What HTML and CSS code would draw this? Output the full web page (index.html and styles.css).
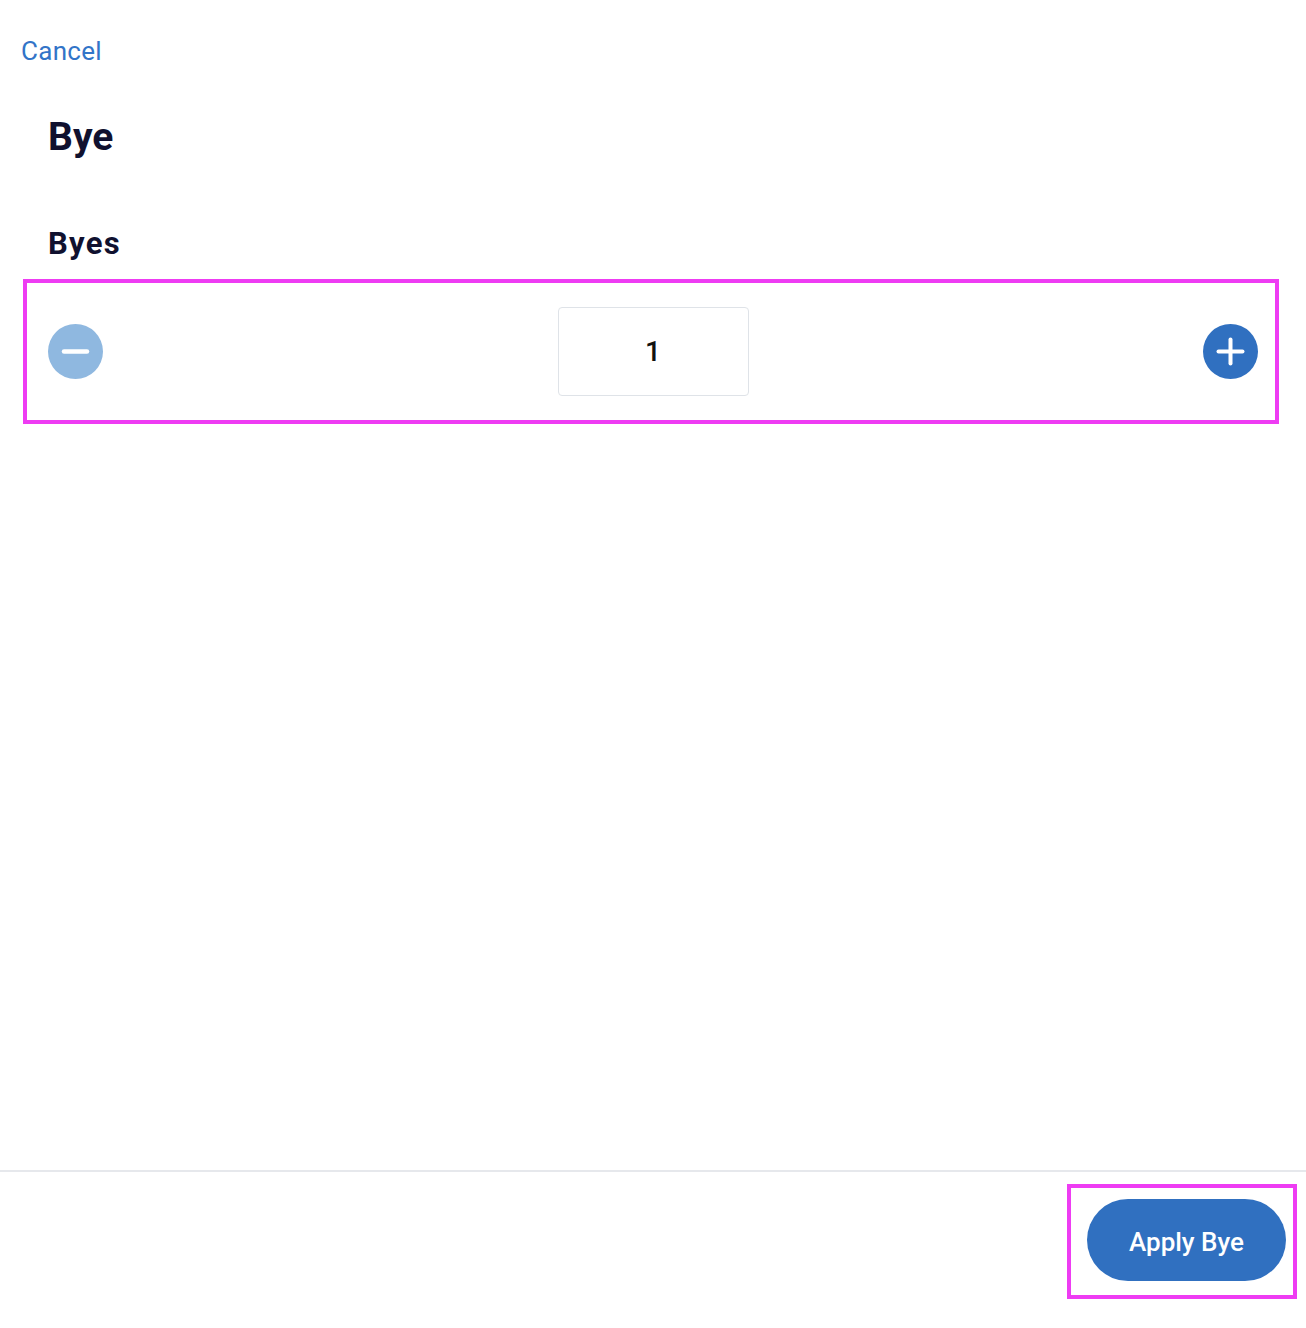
FILE: index.html
```
<!DOCTYPE html>
<html lang="en">
<head>
<meta charset="utf-8">
<title>Bye</title>
<link rel="stylesheet" href="styles.css">
</head>
<body>
<div class="page">
  <main class="main">
    <a class="cancel" href="#">Cancel</a>
    <h1 class="title">Bye</h1>
    <h2 class="label">Byes</h2>
    <div class="stepper">
      <button class="step-btn" type="button" aria-label="Decrease">
        <svg width="55" height="55" viewBox="0 0 55 55">
          <circle cx="27.5" cy="27.5" r="27.5" fill="#8fb8e0"/>
          <line x1="16" y1="27.5" x2="39" y2="27.5" stroke="#fff" stroke-width="4.5" stroke-linecap="round"/>
        </svg>
      </button>
      <div class="value-box">1</div>
      <button class="step-btn" type="button" aria-label="Increase">
        <svg width="55" height="55" viewBox="0 0 55 55">
          <circle cx="27.5" cy="27.5" r="27.5" fill="#3070c0"/>
          <line x1="15.5" y1="27.5" x2="39.5" y2="27.5" stroke="#fff" stroke-width="4" stroke-linecap="round"/>
          <line x1="27.5" y1="15.5" x2="27.5" y2="39.5" stroke="#fff" stroke-width="4" stroke-linecap="round"/>
        </svg>
      </button>
    </div>
  </main>
  <footer class="footer">
    <div class="highlight">
      <button class="apply" type="button">Apply Bye</button>
    </div>
  </footer>
</div>
</body>
</html>
```

FILE: styles.css
```
* { box-sizing: border-box; }
html, body {
  margin: 0;
  padding: 0;
  background: #fff;
}
body {
  font-family: Roboto, "Liberation Sans", Arial, sans-serif;
}
.page {
  display: flex;
  flex-direction: column;
  height: 1328px;
}
.main {
  flex: 1;
  display: flex;
  flex-direction: column;
  align-items: flex-start;
  padding: 36px 27px 0 23px;
}
.cancel {
  margin-left: -2px;
  font-size: 26px;
  line-height: 1.2;
  letter-spacing: 0.3px;
  color: #3274c8;
  text-decoration: none;
}
.title {
  margin: 47px 0 0 25px;
  font-size: 39px;
  line-height: 1.2;
  font-weight: 700;
  color: #10112f;
}
.label {
  margin: 64px 0 0 25px;
  font-size: 31px;
  line-height: 1.2;
  font-weight: 700;
  color: #10112f;
  letter-spacing: 1.3px;
}
.stepper {
  margin-top: 17px;
  align-self: stretch;
  height: 145px;
  border: 4px solid #ee3cf3;
  display: flex;
  align-items: center;
  justify-content: space-between;
  padding: 0 17px 1px 21px;
}
.step-btn {
  border: 0;
  padding: 0;
  background: none;
  width: 55px;
  height: 55px;
  display: block;
  cursor: pointer;
}
.step-btn svg { display: block; }
.value-box {
  width: 191px;
  height: 89px;
  border: 1.5px solid #dfe3e8;
  border-radius: 4px;
  display: flex;
  align-items: center;
  justify-content: center;
  font-size: 28px;
  font-weight: 500;
  color: #111;
}
.footer {
  border-top: 2px solid #e6e8ec;
  display: flex;
  justify-content: flex-end;
  padding: 12px 9px 29px;
}
.highlight {
  border: 4px solid #ee3cf3;
  padding: 11px 7px 14px 16px;
}
.apply {
  display: block;
  width: 199px;
  height: 82px;
  border: 0;
  border-radius: 41px;
  background: #3070c0;
  color: #fff;
  font-family: Roboto, "Liberation Sans", Arial, sans-serif;
  font-size: 26px;
  font-weight: 500;
  padding: 4px 0 0;
  cursor: pointer;
}
```
